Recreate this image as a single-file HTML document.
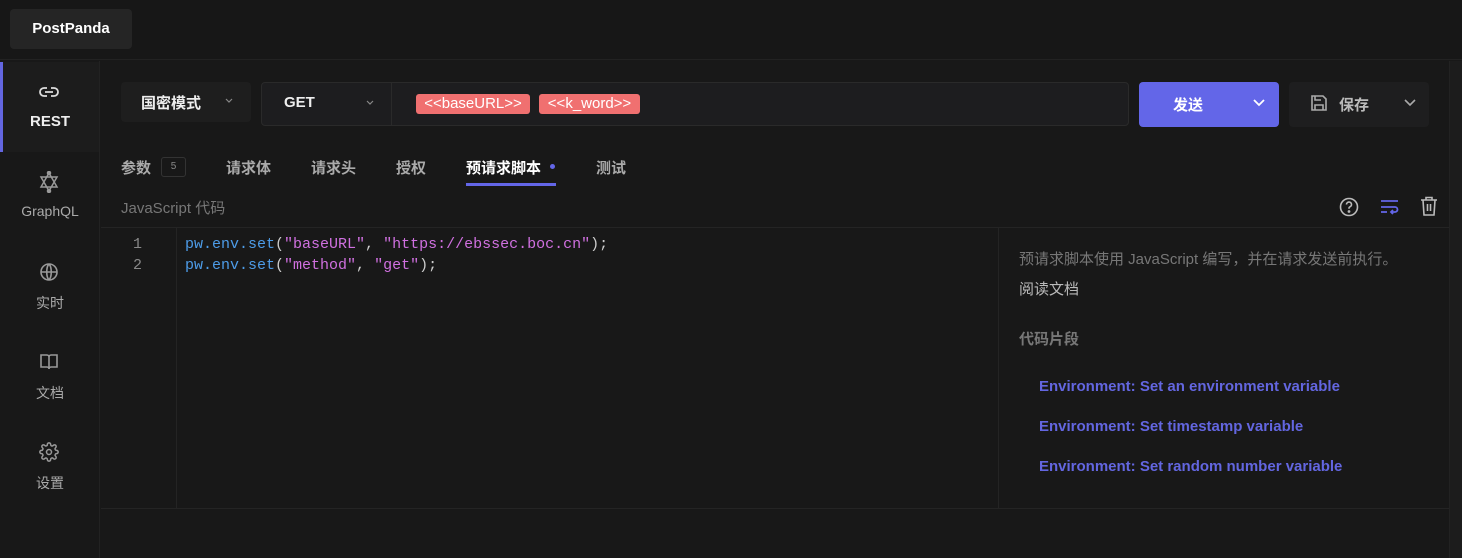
<!DOCTYPE html>
<html><head><meta charset="utf-8"><style>
*{margin:0;padding:0;box-sizing:border-box}
body{width:1462px;height:558px;background:#181818;font-family:"Liberation Sans","Noto Sans CJK SC",sans-serif;color:#ddd;position:relative;overflow:hidden}
.a{position:absolute}
.mono{font-family:"Liberation Mono","DejaVu Sans Mono",monospace;font-size:15px}
.side{color:#aaa;font-size:14px;text-align:center;width:100px}
svg{display:block}
.tab{font-size:15px;color:#aaa;font-weight:bold;top:157px}
.lnk{color:#6366e0;font-weight:bold;font-size:15px;left:1039px}
.pill{top:94px;height:20px;background:#f07070;border-radius:3px;color:#fff;font-size:15px;line-height:20px;text-align:center;white-space:nowrap}
</style></head><body>
<div class="a" style="left:0;top:0;width:1462px;height:60px;background:#171717;border-bottom:1px solid #222"></div>
<div class="a" style="left:10px;top:9px;width:122px;height:40px;background:#252525;border-radius:4px;color:#fff;font-weight:bold;font-size:15px;line-height:40px;text-align:center">PostPanda</div>
<div class="a" style="left:0;top:61px;width:100px;height:497px;background:#181818;border-right:1px solid #222"></div>
<div class="a" style="left:0;top:62px;width:3px;height:90px;background:#6366e0"></div>
<div class="a" style="left:3px;top:62px;width:96px;height:90px;background:#1c1c1c"></div>
<svg class="a" style="left:39px;top:83px" width="20" height="18" viewBox="0 0 20 18" fill="none" stroke="#ddd" stroke-width="1.8"><path d="M8 5H5a4 4 0 0 0 0 8h3M12 5h3a4 4 0 0 1 0 8h-3M6 9h8"/></svg>
<div class="a side" style="top:113px;color:#eee;font-weight:bold;font-size:15px">REST</div>
<svg class="a" style="left:39px;top:171px" width="20" height="22" viewBox="0 0 20 22" fill="none" stroke="#999" stroke-width="1.5"><path d="M10 2L18 16H2Z M10 20L2 6H18Z"/><circle cx="10" cy="2" r="1.5" fill="#999"/><circle cx="10" cy="20" r="1.5" fill="#999"/></svg>
<div class="a side" style="top:203px">GraphQL</div>
<svg class="a" style="left:39px;top:262px" width="20" height="20" viewBox="0 0 20 20" fill="none" stroke="#999" stroke-width="1.6"><circle cx="10" cy="10" r="8"/><path d="M2 10h16M10 2c-3 3-3 13 0 16M10 2c3 3 3 13 0 16"/></svg>
<div class="a side" style="top:293px">实时</div>
<svg class="a" style="left:39px;top:352px" width="20" height="20" viewBox="0 0 20 20" fill="none" stroke="#999" stroke-width="1.6"><path d="M2 3h6a2 2 0 0 1 2 2v12a2 2 0 0 0-2-2H2ZM18 3h-6a2 2 0 0 0-2 2v12a2 2 0 0 1 2-2h6Z"/></svg>
<div class="a side" style="top:383px">文档</div>
<svg class="a" style="left:39px;top:442px" width="20" height="20" viewBox="0 0 24 24" fill="none" stroke="#999" stroke-width="1.8"><circle cx="12" cy="12" r="3"/><path d="M19.4 15a1.7 1.7 0 0 0 .3 1.8l.1.1a2 2 0 1 1-2.8 2.8l-.1-.1a1.7 1.7 0 0 0-2.9 1.2V21a2 2 0 1 1-4 0v-.1a1.7 1.7 0 0 0-2.9-1.2l-.1.1a2 2 0 1 1-2.800-2.8l.1-.1A1.7 1.7 0 0 0 3 14H3a2 2 0 1 1 0-4h.1a1.7 1.7 0 0 0 1.2-2.9l-.1-.1a2 2 0 1 1 2.8-2.8l.1.1A1.7 1.7 0 0 0 10 3V3a2 2 0 1 1 4 0v.1a1.7 1.7 0 0 0 2.9 1.2l.1-.1a2 2 0 1 1 2.8 2.8l-.1.1A1.7 1.7 0 0 0 21 10h0a2 2 0 1 1 0 4h-.1a1.7 1.7 0 0 0-1.5 1z"/></svg>
<div class="a side" style="top:473px">设置</div>

<div class="a" style="left:1449px;top:61px;width:13px;height:497px;background:#1c1c1c;border-left:1px solid #222"></div>

<div class="a" style="left:121px;top:82px;width:130px;height:40px;background:#1e1e1e;border-radius:4px"></div>
<div class="a" style="left:141px;top:92px;font-size:15px;font-weight:bold;color:#eee">国密模式</div>
<svg class="a" style="left:224px;top:98px" width="10" height="6" viewBox="0 0 10 6" fill="none" stroke="#888" stroke-width="1.2"><path d="M2 1l3 3 3-3"/></svg>
<div class="a" style="left:261px;top:82px;width:868px;height:44px;background:#1d1d1f;border:1px solid #2a2a2a;border-radius:4px"></div>
<div class="a" style="left:391px;top:83px;width:1px;height:42px;background:#2a2a2a"></div>
<div class="a" style="left:284px;top:94px;font-size:15px;font-weight:bold;color:#eee">GET</div>
<svg class="a" style="left:365px;top:100px" width="10" height="6" viewBox="0 0 10 6" fill="none" stroke="#888" stroke-width="1.2"><path d="M2 1l3 3 3-3"/></svg>
<div class="a pill" style="left:416px;width:114px">&lt;&lt;baseURL&gt;&gt;</div>
<div class="a pill" style="left:539px;width:101px">&lt;&lt;k_word&gt;&gt;</div>

<div class="a" style="left:1139px;top:82px;width:140px;height:45px;background:#6366e8;border-radius:4px"></div>
<div class="a" style="left:1173px;top:94px;font-size:15px;font-weight:bold;color:#fff">发送</div>
<svg class="a" style="left:1252px;top:99px" width="14" height="8" viewBox="0 0 14 8" fill="none" stroke="#fff" stroke-width="1.8"><path d="M2 1l5 5 5-5"/></svg>
<div class="a" style="left:1289px;top:82px;width:140px;height:45px;background:#1e1e1f;border-radius:4px"></div>
<svg class="a" style="left:1310px;top:94px" width="18" height="18" viewBox="0 0 18 18" fill="none" stroke="#aaa" stroke-width="1.6"><path d="M2 2h11l3 3v11H2Z M5 16v-5h8v5 M5 2v4h6"/></svg>
<div class="a" style="left:1339px;top:94px;font-size:15px;font-weight:bold;color:#bbb">保存</div>
<svg class="a" style="left:1403px;top:99px" width="14" height="8" viewBox="0 0 14 8" fill="none" stroke="#aaa" stroke-width="1.6"><path d="M2 1l5 5 5-5"/></svg>

<div class="a tab" style="left:121px">参数</div>
<div class="a" style="left:161px;top:157px;width:25px;height:20px;border:1px solid #333;border-radius:3px;font-size:10px;color:#888;text-align:center;line-height:18px">5</div>
<div class="a tab" style="left:226px">请求体</div>
<div class="a tab" style="left:311px">请求头</div>
<div class="a tab" style="left:396px">授权</div>
<div class="a tab" style="left:466px;color:#fff">预请求脚本</div>
<div class="a" style="left:550px;top:164px;width:5px;height:5px;border-radius:50%;background:#6366e8"></div>
<div class="a" style="left:466px;top:183px;width:90px;height:3px;background:#6366e8"></div>
<div class="a tab" style="left:596px">测试</div>

<div class="a" style="left:121px;top:197px;font-size:15px;color:#777">JavaScript 代码</div>
<svg class="a" style="left:1339px;top:197px" width="20" height="20" viewBox="0 0 20 20" fill="none" stroke="#bbb" stroke-width="1.6"><circle cx="10" cy="10" r="8.5"/><path d="M7.5 7.5a2.5 2.5 0 1 1 3.5 2.3c-.7.3-1 .8-1 1.5v.5"/><circle cx="10" cy="14.5" r=".6" fill="#bbb"/></svg>
<svg class="a" style="left:1380px;top:199px" width="19" height="16" viewBox="0 0 19 16" fill="none" stroke="#6366e8" stroke-width="1.8"><path d="M1 2h17M1 8h14a2.5 2.5 0 0 1 0 5h-4M13 11l-2 2 2 2M1 13h6"/></svg>
<svg class="a" style="left:1420px;top:196px" width="18" height="20" viewBox="0 0 18 20" fill="none" stroke="#bbb" stroke-width="1.6"><path d="M1 4h16M6 4V1.5h6V4M3 4l1 15h10l1-15M7.5 8v7M10.5 8v7"/></svg>

<div class="a" style="left:101px;top:227px;width:1348px;height:1px;background:#242424"></div>
<div class="a" style="left:176px;top:228px;width:1px;height:280px;background:#242424"></div>
<div class="a" style="left:998px;top:228px;width:1px;height:280px;background:#242424"></div>
<div class="a" style="left:101px;top:508px;width:1348px;height:1px;background:#242424"></div>
<div class="a mono" style="left:133px;top:234px;color:#888;line-height:21px">1<br>2</div>
<div class="a mono" style="left:185px;top:234px;line-height:21px;color:#ccc;white-space:pre"><span style="color:#4d9ce8">pw.env.set</span>(<span style="color:#d070e0">"baseURL"</span>, <span style="color:#d070e0">"https://ebssec.boc.cn"</span>);
<span style="color:#4d9ce8">pw.env.set</span>(<span style="color:#d070e0">"method"</span>, <span style="color:#d070e0">"get"</span>);</div>

<div class="a" style="left:1019px;top:248px;font-size:15px;color:#777">预请求脚本使用 JavaScript 编写，并在请求发送前执行。</div>
<div class="a" style="left:1019px;top:278px;font-size:15px;color:#bbb">阅读文档</div>
<div class="a" style="left:1019px;top:328px;font-size:15px;color:#777;font-weight:bold">代码片段</div>
<div class="a lnk" style="top:378px">Environment: Set an environment variable</div>
<div class="a lnk" style="top:418px">Environment: Set timestamp variable</div>
<div class="a lnk" style="top:458px">Environment: Set random number variable</div>
</body></html>
